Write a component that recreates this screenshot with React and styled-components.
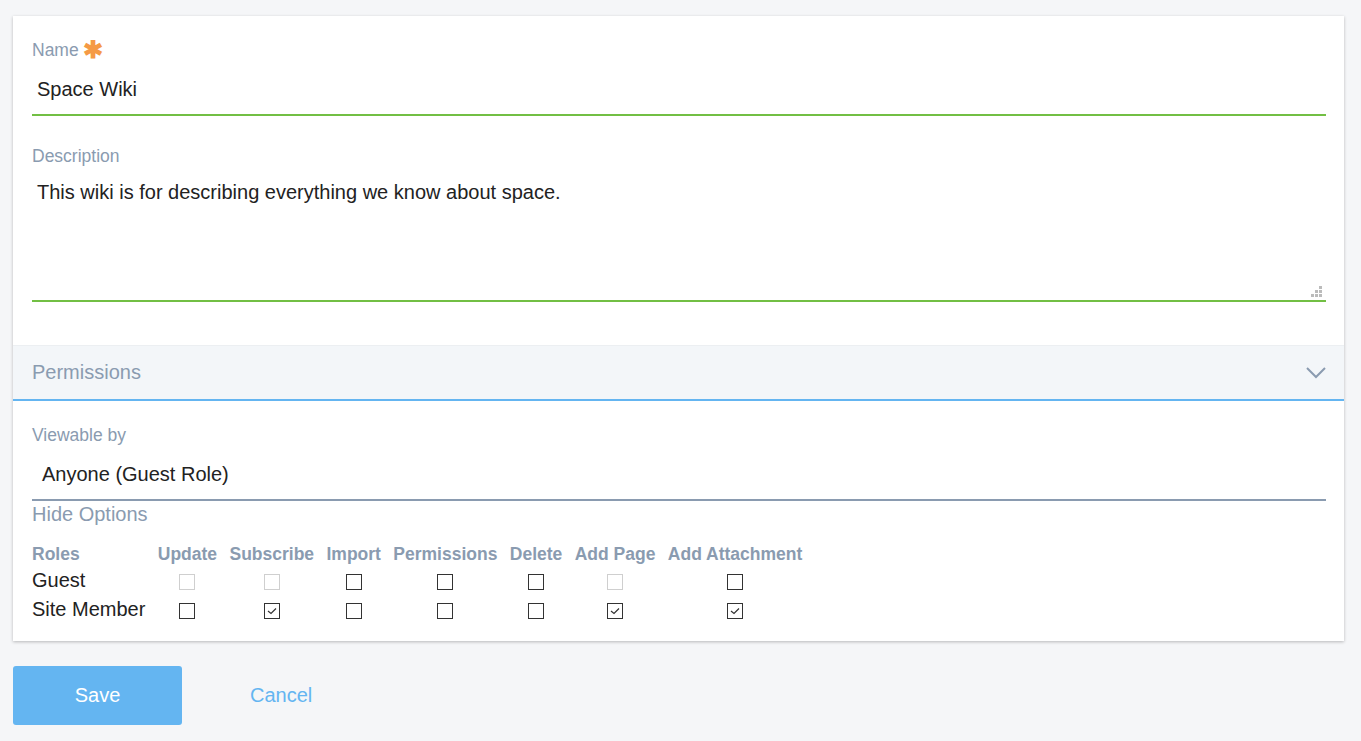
import React from 'react';
import styled, { createGlobalStyle } from 'styled-components';

const GlobalStyle = createGlobalStyle`
  body {
    margin: 0;
    background: #f5f6f8;
    font-family: "Liberation Sans", Arial, sans-serif;
    color: #222;
  }
`;

const Page = styled.div`
  padding: 16px 17px 15px 13px;
`;

const Card = styled.div`
  background: #fff;
  box-shadow: 0 1px 3px rgba(0, 0, 0, 0.25);
  padding-top: 24px;
  padding-bottom: 17px;
`;

const Section = styled.div`
  padding: 0 18px 0 19px;
`;

const Label = styled.div`
  font-size: 17.5px;
  line-height: 20px;
  color: #8a9bb0;
  margin-top: ${p => p.$top || 0}px;
  display: flex;
  align-items: center;
`;

const Star = styled.span`
  color: #f59a45;
  font-size: 24px;
  line-height: 20px;
  margin-left: 4px;
  font-weight: bold;
`;

const Input = styled.div`
  margin-top: 5px;
  height: 49px;
  border-bottom: 2px solid ${p => p.$line || '#72bf44'};
  font-size: 20px;
  display: flex;
  align-items: center;
  padding-left: ${p => p.$indent || 5}px;
  color: #222;
`;

const TextArea = styled.div`
  position: relative;
  margin-top: 4px;
  border-bottom: 2px solid #72bf44;
  font-size: 20px;
  padding: 8px 5px 0;
  box-sizing: border-box;
  line-height: 28px;
  height: 132px;
`;

const Grip = styled.svg`
  position: absolute;
  right: 3px;
  bottom: 2px;
`;

const Accordion = styled.div`
  margin-top: 43px;
  height: 53px;
  background: #f3f6f9;
  border-top: 1px solid #eceff2;
  border-bottom: 2px solid #64b5f1;
  display: flex;
  align-items: center;
  justify-content: space-between;
  padding: 0 18px 0 19px;
  font-size: 20px;
  color: #8a9bb0;
`;

const Toggle = styled.div`
  margin-top: 3px;
  font-size: 20px;
  line-height: 20px;
  color: #8a9bb0;
`;

const Table = styled.table`
  margin-top: 18px;
  border-collapse: collapse;
  font-size: 20px;
  th, td {
    padding: 0 12.4px 0 0;
    text-align: center;
  }
  th:first-child, td:first-child {
    text-align: left;
  }
`;

const Head = styled.th`
  font-size: 17.5px;
  font-weight: bold;
  color: #8a9bb0;
  height: 24px;
  white-space: nowrap;
`;

const Cell = styled.td`
  height: 29px;
  vertical-align: middle;
  white-space: nowrap;
`;

const Box = styled.span`
  display: inline-flex;
  align-items: center;
  justify-content: center;
  width: 14px;
  height: 14px;
  border: 1px solid ${p => (p.$disabled ? '#cfcfcf' : '#333')};
  vertical-align: middle;
  background: #fff;
`;

const Actions = styled.div`
  margin-top: 25px;
  display: flex;
  align-items: center;
`;

const SaveButton = styled.button`
  width: 169px;
  height: 59px;
  border: none;
  border-radius: 3px;
  background: #64b5f1;
  color: #fff;
  font-family: inherit;
  font-size: 20px;
`;

const CancelLink = styled.span`
  margin-left: 68px;
  color: #64b5f1;
  font-size: 20px;
`;

const Check = ({ on, disabled }) => (
  <Box $disabled={disabled}>
    {on && (
      <svg width="10" height="8" viewBox="0 0 10 8">
        <path d="M1 4 L4 6.5 L9 1.5" fill="none" stroke="#333" strokeWidth="1.2" />
      </svg>
    )}
  </Box>
);

const columns = ['Update', 'Subscribe', 'Import', 'Permissions', 'Delete', 'Add Page', 'Add Attachment'];

const rows = [
  { role: 'Guest', cells: [[0, 1], [0, 1], [0, 0], [0, 0], [0, 0], [0, 1], [0, 0]] },
  { role: 'Site Member', cells: [[0, 0], [1, 0], [0, 0], [0, 0], [0, 0], [1, 0], [1, 0]] },
];

export default function App() {
  return (
    <Page>
      <GlobalStyle />
      <Card>
        <Section>
          <Label>Name<Star>✱</Star></Label>
          <Input>Space Wiki</Input>
          <Label $top={30}>Description</Label>
          <TextArea>
            This wiki is for describing everything we know about space.
            <Grip width="12" height="12" viewBox="0 0 12 12">
              <g fill="#bbb">
                <rect x="8" y="0" width="3" height="3" />
                <rect x="4" y="4" width="3" height="3" />
                <rect x="8" y="4" width="3" height="3" />
                <rect x="0" y="8" width="3" height="3" />
                <rect x="4" y="8" width="3" height="3" />
                <rect x="8" y="8" width="3" height="3" />
              </g>
            </Grip>
          </TextArea>
        </Section>
        <Accordion>
          Permissions
          <svg width="20" height="12" viewBox="0 0 20 12">
            <path d="M1 1 L10 10 L19 1" fill="none" stroke="#8a9bb0" strokeWidth="2" />
          </svg>
        </Accordion>
        <Section>
          <Label $top={24}>Viewable by</Label>
          <Input $line="#8a9bb0" $indent={10}>Anyone (Guest Role)</Input>
          <Toggle>Hide Options</Toggle>
          <Table>
            <thead>
              <tr>
                <Head>Roles</Head>
                {columns.map(c => <Head key={c}>{c}</Head>)}
              </tr>
            </thead>
            <tbody>
              {rows.map(r => (
                <tr key={r.role}>
                  <Cell>{r.role}</Cell>
                  {r.cells.map(([on, dis], i) => (
                    <Cell key={i}><Check on={!!on} disabled={!!dis} /></Cell>
                  ))}
                </tr>
              ))}
            </tbody>
          </Table>
        </Section>
      </Card>
      <Actions>
        <SaveButton>Save</SaveButton>
        <CancelLink>Cancel</CancelLink>
      </Actions>
    </Page>
  );
}
